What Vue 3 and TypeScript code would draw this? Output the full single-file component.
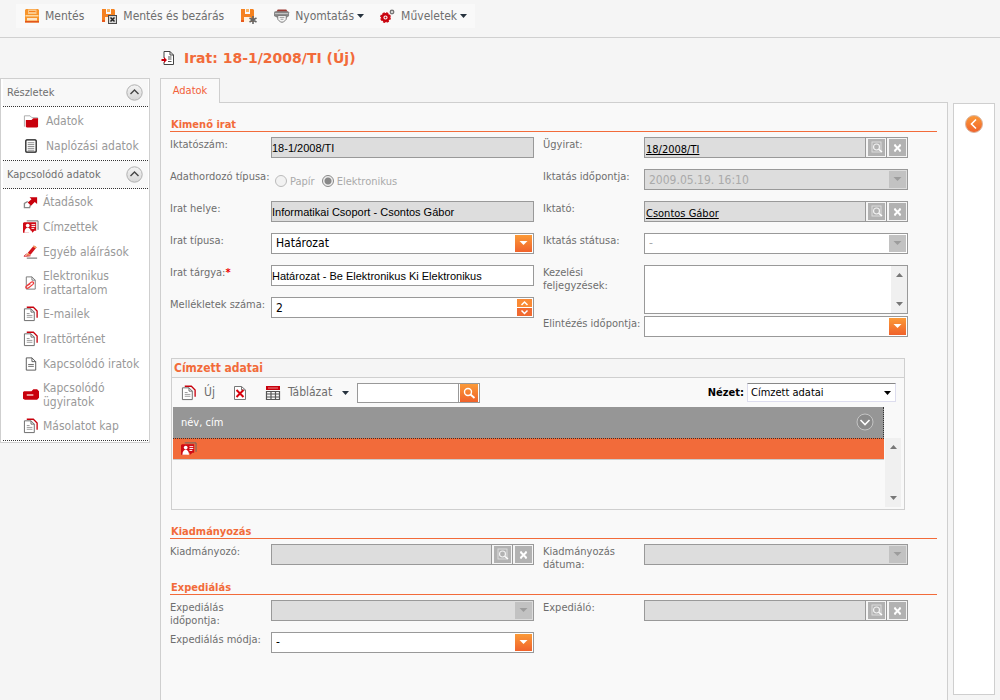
<script setup lang="ts">
import { ref } from 'vue'

interface NavItem {
  label: string
  icon: string
}
interface NavGroup {
  title: string
  wide: boolean
  items: NavItem[]
}

const groups: NavGroup[] = [
  {
    title: 'Részletek',
    wide: true,
    items: [
      { label: 'Adatok', icon: 'folder' },
      { label: 'Naplózási adatok', icon: 'log' },
    ],
  },
  {
    title: 'Kapcsolódó adatok',
    wide: false,
    items: [
      { label: 'Átadások', icon: 'handover' },
      { label: 'Címzettek', icon: 'card' },
      { label: 'Egyéb aláírások', icon: 'pen' },
      { label: 'Elektronikus irattartalom', icon: 'clip' },
      { label: 'E-mailek', icon: 'docs' },
      { label: 'Irattörténet', icon: 'docs' },
      { label: 'Kapcsolódó iratok', icon: 'doc' },
      { label: 'Kapcsolódó ügyiratok', icon: 'redfolder' },
      { label: 'Másolatot kap', icon: 'docs' },
    ],
  },
]

const subject = ref('Határozat - Be Elektronikus Ki Elektronikus')
const attachments = ref('2')
const notes = ref('')
const dueDate = ref('')
const search = ref('')
</script>

<template>
  <svg class="defs" aria-hidden="true">
    <linearGradient id="g-orange" x1="0" y1="0" x2="0" y2="1">
      <stop offset="0" stop-color="#fb9a38" />
      <stop offset="1" stop-color="#f0622b" />
    </linearGradient>
    <linearGradient id="g-grey" x1="0" y1="0" x2="0" y2="1">
      <stop offset="0" stop-color="#f4f4f4" />
      <stop offset="1" stop-color="#d6d6d6" />
    </linearGradient>
    <symbol id="i-save" viewBox="0 0 16 16">
      <path d="M2 1h12l1 1v12.500H1V2z" fill="#f7952c" />
      <path d="M4 1.500h8.500v4.500H4z" fill="#fbc98a" />
      <path d="M5 3h6.500v1H5z" fill="#f58220" />
      <path d="M1.500 7h13v1.500h-13z" fill="#fdd9a0" />
      <path d="M3 10h10v2.500H3z" fill="#fde6c8" />
      <path d="M1 13h14v1.500H1z" fill="#e2551c" />
    </symbol>
    <symbol id="i-disk" viewBox="0 0 16 16">
      <path d="M1 1h4v5h5V1h3l1 1v12H1z" fill="#f58220" />
      <path d="M6 1h3v3H6z" fill="#fbb562" />
      <path d="M4 9h7v5H4z" fill="#fff3e2" />
      <path d="M1 12h3v2H1z" fill="#e85a1c" />
    </symbol>
    <symbol id="i-saveclose" viewBox="0 0 18 16">
      <use href="#i-disk" x="1" width="16" height="16" />
      <path d="M8 7h9v9H8z" fill="#4a4a4a" />
      <path d="M9 8h7v7H9z" fill="#d5d5d5" />
      <path d="M10.500 9.500l4 4m0-4l-4 4" stroke="#222" stroke-width="1.500" />
    </symbol>
    <symbol id="i-savenew" viewBox="0 0 18 16">
      <use href="#i-disk" width="16" height="16" />
      <path d="M13 8v8M9.500 10l7 4M9.500 14l7-4" stroke="#666" stroke-width="1.600" />
    </symbol>
    <symbol id="i-print" viewBox="0 0 17 16">
      <path d="M4 1h9l2 3H2z" fill="#9c3a34" />
      <path d="M0 4l1-1h14l1 1v4l-3 2H4L0 8z" fill="#858585" />
      <path d="M1 5h14v1H1z" fill="#d0d0d0" />
      <path d="M4 7.500h9v4L10 14.500H7l-3-3z" fill="#f4f4f4" stroke="#777" />
      <path d="M6 9.500h5M7 11.500h3" stroke="#999" />
    </symbol>
    <symbol id="i-gears" viewBox="0 0 16 16">
      <circle cx="5.500" cy="9.500" r="3.300" fill="none" stroke="#c8000c" stroke-width="2.400" />
      <circle cx="5.500" cy="9.500" r="4.700" fill="none" stroke="#c8000c" stroke-width="1.400" stroke-dasharray="2.300 1.400" />
      <circle cx="5.500" cy="9.500" r="1" fill="#c8000c" />
      <circle cx="12" cy="4" r="1.700" fill="none" stroke="#777" stroke-width="1.500" />
    </symbol>
    <symbol id="i-title" viewBox="0 0 15 16">
      <path d="M3.500 8V1.500h6l3.500 3.500v9.500H3.500V12" fill="#fff" stroke="#444" />
      <path d="M9.500 1.500V5H13" fill="none" stroke="#444" />
      <path d="M7.500 7H11M7.500 9H11M7.500 11.500H11" stroke="#555" />
      <path d="M1 9h2.500V7l3 3-3 3v-2H1z" fill="#c8000c" />
    </symbol>
    <symbol id="i-folder" viewBox="0 0 17 16">
      <path d="M1.500 14V2.500h6l2 2h6V7" fill="none" stroke="#aaa" />
      <path d="M3 7h6l2-2h5v9l-1 1H4l-1-1z" fill="#c8000c" />
    </symbol>
    <symbol id="i-log" viewBox="0 0 17 16">
      <rect x="3" y="1.500" width="11" height="13" rx="1" fill="#fff" stroke="#111" stroke-width="1.300" />
      <path d="M5 4.500h7M5 6.500h7M5 8.500h7M5 10.500h7M5 12.500h7" stroke="#888" />
    </symbol>
    <symbol id="i-handover" viewBox="0 0 17 16">
      <path d="M1.500 9.500L5 7.500M1.500 9v5H7l1-3" fill="none" stroke="#888" stroke-width="1.400" />
      <path d="M7 3h8v7l-2.500-2-4 4L5 8.500l4-3.500z" fill="#c8000c" />
    </symbol>
    <symbol id="i-card" viewBox="0 0 17 16">
      <path d="M4 1.500h12V11" fill="none" stroke="#666" />
      <path d="M0 4l1-1h13v9h-2l-2 2-1-2H8l-2 2H0z" fill="#cf0a14" />
      <circle cx="5" cy="6.500" r="2" fill="#fff" />
      <path d="M1.500 14c0-7 7-7 7 0z" fill="#fff" />
      <path d="M9 5.500h4M9 7.500h4M9 9.500h3" stroke="#fff" />
    </symbol>
    <symbol id="i-pen" viewBox="0 0 17 16">
      <path d="M11.500 1l3 2-6.500 8-3-2z" fill="#d2141c" />
      <path d="M11.500 1l3 2-1 1.300-3-2z" fill="#f4a261" />
      <path d="M5 9l3 2-4.500 1.500z" fill="#f08a4a" />
      <path d="M4 10c-3 2-4 3-1.500 2.500L8 12" fill="none" stroke="#d2141c" />
      <path d="M4 14.500h11" stroke="#777" stroke-width="1.200" />
    </symbol>
    <symbol id="i-clip" viewBox="0 0 17 16">
      <path d="M3.500 1.500h6l3.500 3.500v9.500H3.500z" fill="#fff" stroke="#777" />
      <path d="M9.500 1.500V5H13" fill="none" stroke="#777" />
      <path d="M4 11l5-4c2-1 3 1 1.500 2.500L6 13c-2 1.500-4 0-2.500-1.500L8 8.500" fill="none" stroke="#ee3a3a" stroke-width="1.300" />
    </symbol>
    <symbol id="i-doc" viewBox="0 0 17 16">
      <path d="M3.500 1.500h6L13.500 5.500V14.500h-10z" fill="#fff" stroke="#555" />
      <path d="M9.500 1.500v4h4" fill="none" stroke="#555" />
      <path d="M5.500 8.500h6M5.500 10.500h6" stroke="#666" />
    </symbol>
    <symbol id="i-docs" viewBox="0 0 17 16">
      <path d="M4 .8h7l4 4V12" fill="none" stroke="#c8000c" stroke-width="1.400" />
      <path d="M1.500 2.500h7L12 6v9H1.500z" fill="#fff" stroke="#666" />
      <path d="M8.500 2.500V6H12" fill="none" stroke="#666" />
      <path d="M4 7.500h3M4 9.500h6M4 11.500h6" stroke="#999" />
    </symbol>
    <symbol id="i-redfolder" viewBox="0 0 17 16">
      <path d="M0 5l1-1h8l2-2h4l2 2v7l-2 2H2l-2-1z" fill="#c8000c" />
      <path d="M4 7h7v2H4z" fill="#f0a0a0" />
    </symbol>
    <symbol id="i-del" viewBox="0 0 16 16">
      <path d="M2.500 1.500h7L13.500 5v9.500h-11z" fill="#fff" stroke="#777" />
      <path d="M9.500 1.500V5h4" fill="none" stroke="#777" />
      <path d="M4.500 5l7 7m0-7l-7 7" stroke="#d8000c" stroke-width="2" />
    </symbol>
    <symbol id="i-table" viewBox="0 0 16 16">
      <path d="M1 1h14v4H1z" fill="#c8000c" />
      <path d="M3 3h10" stroke="#eb8b8b" />
      <path d="M1.500 6.500h13v8h-13zM1.500 9h13M1.500 12h13M6 6.500v8M10.500 6.500v8" fill="none" stroke="#555" stroke-width="1.200" />
    </symbol>
    <symbol id="i-lens" viewBox="0 0 19 19">
      <rect x="1" y="1" width="17" height="17" fill="#b2b2b2" />
      <rect x="5" y="4" width="9" height="10" fill="none" stroke="#dcdcdc" />
      <circle cx="9.500" cy="9" r="3" fill="none" stroke="#f2f2f2" stroke-width="1.200" />
      <path d="M12 11.500l3 2.500" stroke="#fff" stroke-width="1.500" />
    </symbol>
    <symbol id="i-clear" viewBox="0 0 19 19">
      <rect x="1" y="1" width="17" height="17" fill="#b2b2b2" />
      <path d="M6.500 7l6 6m0-6l-6 6" stroke="#fff" stroke-width="2" />
      <path d="M6 7h2M11 7h2M6 13h2M11 13h2" stroke="#fff" />
    </symbol>
    <symbol id="i-search" viewBox="0 0 18 18">
      <rect width="18" height="18" fill="url(#g-orange)" />
      <circle cx="8" cy="8" r="3.500" fill="none" stroke="#fff" stroke-width="1.400" />
      <path d="M10.500 10.500l4 3.500" stroke="#fff" stroke-width="1.800" />
    </symbol>
    <symbol id="i-drop" viewBox="0 0 17 17">
      <rect width="17" height="17" fill="url(#g-orange)" />
      <path d="M4.500 6h8l-4 4z" fill="#fff" />
    </symbol>
    <symbol id="i-dropoff" viewBox="0 0 17 17">
      <rect width="17" height="17" fill="#c2c2c2" />
      <path d="M4.500 6h8l-4 4z" fill="#9c9c9c" />
    </symbol>
    <symbol id="i-up" viewBox="0 0 15 8">
      <rect width="15" height="8" fill="#fa8a35" />
      <path d="M4.500 6l3-3 3 3" fill="none" stroke="#fff" stroke-width="1.500" />
    </symbol>
    <symbol id="i-down" viewBox="0 0 15 8">
      <rect width="15" height="8" fill="#f16a30" />
      <path d="M4.500 2.500l3 3 3-3" fill="none" stroke="#fff" stroke-width="1.500" />
    </symbol>
    <symbol id="i-caret" viewBox="0 0 7 4"><path d="M0 0h7L3.500 4z" /></symbol>
    <symbol id="i-scrollup" viewBox="0 0 7 4"><path d="M0 4h7L3.500 0z" fill="#777" /></symbol>
    <symbol id="i-scrolldown" viewBox="0 0 7 4"><path d="M0 0h7L3.500 4z" fill="#777" /></symbol>
    <symbol id="i-collapse" viewBox="0 0 17 17">
      <circle cx="8.500" cy="8.500" r="7.700" fill="url(#g-grey)" stroke="#b0b0b0" />
      <path d="M4.500 10l4-4 4 4" fill="none" stroke="#444" stroke-width="1.400" />
    </symbol>
    <symbol id="i-expand" viewBox="0 0 18 18">
      <circle cx="9" cy="9" r="8" fill="#8a8a8a" stroke="#c4c4c4" />
      <path d="M4.500 7l4.500 4.500L13.500 7" fill="none" stroke="#fff" stroke-width="1.600" />
    </symbol>
    <symbol id="i-back" viewBox="0 0 18 18">
      <circle cx="9" cy="9" r="8.500" fill="url(#g-orange)" stroke="#d9b7a3" />
      <path d="M11 4.500L6.500 9l4.500 4.500" fill="none" stroke="#fff" stroke-width="1.600" />
    </symbol>
  </svg>

  <div class="page">
    <header class="topbar">
      <div class="toolbar">
        <button type="button" class="tool"><svg class="ic"><use href="#i-save" /></svg>Mentés</button>
        <button type="button" class="tool"><svg class="ic wide"><use href="#i-saveclose" /></svg>Mentés és bezárás</button>
        <button type="button" class="tool" aria-label="Mentés és új"><svg class="ic wide"><use href="#i-savenew" /></svg></button>
        <button type="button" class="tool"><svg class="ic"><use href="#i-print" /></svg>Nyomtatás<svg class="caret"><use href="#i-caret" /></svg></button>
        <button type="button" class="tool"><svg class="ic"><use href="#i-gears" /></svg>Műveletek<svg class="caret"><use href="#i-caret" /></svg></button>
      </div>
    </header>

    <div class="titlebar">
      <svg class="ic"><use href="#i-title" /></svg>
      <h1>Irat: 18-1/2008/TI (Új)</h1>
    </div>

    <div class="body">
      <nav class="side">
        <section v-for="g in groups" :key="g.title" class="group">
          <h2>
            {{ g.title }}
            <button type="button" :aria-label="g.title"><svg class="round"><use href="#i-collapse" /></svg></button>
          </h2>
          <ul :class="{ roomy: g.wide }">
            <li v-for="it in g.items" :key="it.label">
              <a href="#"><svg class="ic"><use :href="'#i-' + it.icon" /></svg><span>{{ it.label }}</span></a>
            </li>
          </ul>
        </section>
      </nav>

      <main class="main">
        <div class="tabs"><a href="#" class="tab">Adatok</a><span class="tabline"></span></div>
        <div class="panel">
          <h2 class="section">Kimenő irat</h2>
          <div class="form first">
            <div class="col">
              <div class="row">
                <label for="f-num">Iktatószám:</label>
                <div class="box off"><input id="f-num" class="arial" value="18-1/2008/TI" readonly /></div>
              </div>
              <div class="row">
                <span class="lbl">Adathordozó típusa:</span>
                <div class="radios">
                  <input id="r-p" type="radio" name="medium" disabled /><label for="r-p">Papír</label>
                  <input id="r-e" type="radio" name="medium" checked disabled /><label for="r-e">Elektronikus</label>
                </div>
              </div>
              <div class="row">
                <label for="f-place">Irat helye:</label>
                <div class="box off"><input id="f-place" class="arial" value="Informatikai Csoport - Csontos Gábor" readonly /></div>
              </div>
              <div class="row">
                <label for="f-type">Irat típusa:</label>
                <div class="box">
                  <select id="f-type" class="big"><option>Határozat</option></select>
                  <svg class="drop"><use href="#i-drop" /></svg>
                </div>
              </div>
              <div class="row">
                <label for="f-subj">Irat tárgya:<b class="req">*</b></label>
                <div class="box"><input id="f-subj" v-model="subject" class="arial" /></div>
              </div>
              <div class="row">
                <label for="f-att">Mellékletek száma:</label>
                <div class="box">
                  <input id="f-att" v-model="attachments" class="big" />
                  <span class="spin">
                    <button type="button" aria-label="Növelés"><svg><use href="#i-up" /></svg></button>
                    <button type="button" aria-label="Csökkentés"><svg><use href="#i-down" /></svg></button>
                  </span>
                </div>
              </div>
            </div>
            <div class="col">
              <div class="row">
                <span class="lbl">Ügyirat:</span>
                <div class="box off">
                  <span class="value"><a href="#">18/2008/TI</a></span>
                  <button type="button" class="mini" aria-label="Keresés"><svg><use href="#i-lens" /></svg></button>
                  <button type="button" class="mini" aria-label="Törlés"><svg><use href="#i-clear" /></svg></button>
                </div>
              </div>
              <div class="row">
                <label for="f-time">Iktatás időpontja:</label>
                <div class="box off">
                  <input id="f-time" class="big" value="2009.05.19. 16:10" disabled />
                  <svg class="drop"><use href="#i-dropoff" /></svg>
                </div>
              </div>
              <div class="row">
                <span class="lbl">Iktató:</span>
                <div class="box off">
                  <span class="value"><a href="#">Csontos Gábor</a></span>
                  <button type="button" class="mini" aria-label="Keresés"><svg><use href="#i-lens" /></svg></button>
                  <button type="button" class="mini" aria-label="Törlés"><svg><use href="#i-clear" /></svg></button>
                </div>
              </div>
              <div class="row">
                <label for="f-status">Iktatás státusa:</label>
                <div class="box">
                  <select id="f-status" class="big" disabled><option>-</option></select>
                  <svg class="drop"><use href="#i-dropoff" /></svg>
                </div>
              </div>
              <div class="row tall">
                <label for="f-notes">Kezelési feljegyzések:</label>
                <div class="box">
                  <textarea id="f-notes" v-model="notes"></textarea>
                  <span class="scroll"><svg><use href="#i-scrollup" /></svg><svg><use href="#i-scrolldown" /></svg></span>
                </div>
              </div>
              <div class="row">
                <label for="f-due">Elintézés időpontja:</label>
                <div class="box">
                  <input id="f-due" v-model="dueDate" class="big" />
                  <button type="button" class="pick" aria-label="Dátum"><svg class="drop"><use href="#i-drop" /></svg></button>
                </div>
              </div>
            </div>
          </div>

          <section class="grid">
            <h3>Címzett adatai</h3>
            <div class="gridbar">
              <button type="button" class="tool"><svg class="ic"><use href="#i-docs" /></svg>Új</button>
              <button type="button" class="tool" aria-label="Törlés"><svg class="ic"><use href="#i-del" /></svg></button>
              <button type="button" class="tool"><svg class="ic"><use href="#i-table" /></svg>Táblázat<svg class="caret"><use href="#i-caret" /></svg></button>
              <div class="search">
                <input v-model="search" aria-label="Keresés" />
                <button type="button" aria-label="Keresés"><svg><use href="#i-search" /></svg></button>
              </div>
              <label for="f-view">Nézet:</label>
              <div class="view">
                <select id="f-view"><option>Címzett adatai</option></select>
                <svg class="caret"><use href="#i-caret" /></svg>
              </div>
            </div>
            <div class="gridbody">
              <table>
                <thead>
                  <tr>
                    <th>
                      <div class="head">név, cím<button type="button" aria-label="Lenyitás"><svg><use href="#i-expand" /></svg></button></div>
                    </th>
                  </tr>
                </thead>
                <tbody>
                  <tr><td><svg class="ic"><use href="#i-card" /></svg></td></tr>
                </tbody>
              </table>
              <span class="scroll"><svg><use href="#i-scrollup" /></svg><svg><use href="#i-scrolldown" /></svg></span>
            </div>
          </section>

          <h2 class="section">Kiadmányozás</h2>
          <div class="form">
            <div class="col">
              <div class="row">
                <span class="lbl">Kiadmányozó:</span>
                <div class="box off">
                  <span class="value"></span>
                  <button type="button" class="mini" aria-label="Keresés"><svg><use href="#i-lens" /></svg></button>
                  <button type="button" class="mini" aria-label="Törlés"><svg><use href="#i-clear" /></svg></button>
                </div>
              </div>
            </div>
            <div class="col">
              <div class="row">
                <label for="f-issued">Kiadmányozás dátuma:</label>
                <div class="box off">
                  <input id="f-issued" class="big" disabled />
                  <svg class="drop"><use href="#i-dropoff" /></svg>
                </div>
              </div>
            </div>
          </div>

          <h2 class="section">Expediálás</h2>
          <div class="form">
            <div class="col">
              <div class="row">
                <label for="f-exp">Expediálás időpontja:</label>
                <div class="box off">
                  <input id="f-exp" class="big" disabled />
                  <svg class="drop"><use href="#i-dropoff" /></svg>
                </div>
              </div>
              <div class="row">
                <label for="f-mode">Expediálás módja:</label>
                <div class="box">
                  <select id="f-mode" class="big"><option>-</option></select>
                  <svg class="drop"><use href="#i-drop" /></svg>
                </div>
              </div>
            </div>
            <div class="col">
              <div class="row">
                <span class="lbl">Expediáló:</span>
                <div class="box off">
                  <span class="value"></span>
                  <button type="button" class="mini" aria-label="Keresés"><svg><use href="#i-lens" /></svg></button>
                  <button type="button" class="mini" aria-label="Törlés"><svg><use href="#i-clear" /></svg></button>
                </div>
              </div>
            </div>
          </div>
        </div>
      </main>

      <aside class="drawer">
        <button type="button" aria-label="Panel megnyitása"><svg><use href="#i-back" /></svg></button>
      </aside>
    </div>
  </div>
</template>

<style>
body {
  margin: 0;
  background: #f5f5f5;
}
</style>

<style scoped>
* {
  box-sizing: border-box;
}
.defs {
  position: absolute;
  width: 0;
  height: 0;
}
.page {
  min-height: 100vh;
  display: flex;
  flex-direction: column;
  font-family: 'DejaVu Sans Condensed', 'Noto Sans', sans-serif;
  font-size: 11px;
  line-height: 13px;
  color: #6e6e6e;
}
h1,
h2,
h3,
ul {
  margin: 0;
  padding: 0;
  font-size: 11px;
}
button {
  border: 0;
  padding: 0;
  background: none;
  font: inherit;
  color: inherit;
  display: flex;
  align-items: center;
}
input,
select,
textarea {
  border: 0;
  margin: 0;
  padding: 0;
  background: none;
  font: inherit;
  color: #000;
  outline: none;
  appearance: none;
  min-width: 0;
  border-radius: 0;
}
svg {
  display: block;
  flex: none;
}
.ic {
  width: 16px;
  height: 16px;
}
.ic.wide {
  width: 18px;
}
.caret {
  width: 7px;
  height: 4px;
  fill: #26323e;
}
.topbar {
  height: 38px;
  padding: 4px 16px;
  border-bottom: 1px solid #d0d0d0;
}
.toolbar {
  display: inline-flex;
  height: 24px;
  gap: 16px;
  padding: 0 8px;
  background: #f9f9f9;
}
.tool {
  font-size: 12px;
  gap: 5px;
}
.toolbar .tool .caret {
  margin-left: -2px;
}
.titlebar {
  height: 40px;
  display: flex;
  align-items: center;
  gap: 8px;
  padding-left: 160px;
}
h1 {
  font-family: 'DejaVu Sans', sans-serif;
  font-size: 14px;
  line-height: 18px;
  color: #f26b3a;
}
.body {
  flex: 1;
  display: flex;
  align-items: flex-start;
  padding-right: 5px;
}
.side {
  flex: none;
  width: 150px;
  margin-right: 10px;
  padding: 0 1px 1px 2px;
  border: 1px solid #cfcfcf;
  background: #fff;
}
.group h2 {
  height: 28px;
  display: flex;
  align-items: center;
  justify-content: space-between;
  padding: 0 5px 0 4px;
  background: #f8f8f8;
  border-bottom: 1px dotted #333;
  font-weight: normal;
}
.round {
  width: 17px;
  height: 17px;
}
.group ul {
  list-style: none;
  padding: 1px 0 1px 20px;
  border-bottom: 1px dotted #333;
}
.group ul.roomy {
  padding-top: 2px;
}
.group a {
  min-height: 25px;
  display: flex;
  align-items: center;
  gap: 4px;
  padding: 4px 0 5px;
  font-size: 12px;
  line-height: 14px;
  color: #999;
  text-decoration: none;
}
.group .roomy a {
  gap: 7px;
}
.main {
  flex: 1;
  min-width: 0;
  align-self: stretch;
  display: flex;
  flex-direction: column;
}
.tabs {
  display: flex;
  height: 25px;
}
.tab {
  width: 60px;
  border: 1px solid #cfcfcf;
  border-bottom: 0;
  background: #f9f9f9;
  text-align: center;
  line-height: 23px;
  color: #f2603a;
  text-decoration: none;
}
.tabline {
  flex: 1;
  border-bottom: 1px solid #cfcfcf;
}
.panel {
  flex: 1;
  padding: 15px 10px 20px 9px;
  border: 1px solid #cfcfcf;
  border-width: 0 1px;
  background: #f9f9f9;
}
.section {
  height: 14px;
  margin-bottom: 5px;
  padding-left: 1px;
  line-height: 14px;
  color: #f26b3a;
  border-bottom: 1px solid #f26b3a;
}
.form {
  display: grid;
  grid-template-columns: 364fr 365fr;
  gap: 9px;
  padding-right: 29px;
  margin-bottom: 5px;
}
.form.first {
  margin-bottom: 10px;
}
.row {
  display: flex;
  align-items: flex-start;
  min-height: 32px;
}
.row.tall {
  min-height: 51px;
}
.row > label,
.lbl {
  flex: none;
  width: 101px;
  padding-top: 1px;
}
.req {
  color: #e00;
}
.box {
  flex: 1;
  min-width: 0;
  height: 21px;
  display: flex;
  align-items: center;
  border: 1px solid #999;
  background: #fff;
  color: #000;
}
.box > input,
.box > select {
  flex: 1;
  height: 19px;
}
.off {
  background: #ddd;
}
.arial {
  font-family: 'Liberation Sans', Arial, sans-serif;
}
.big {
  font-size: 12px;
  padding-left: 4px;
}
.big:disabled {
  color: #aaa;
  opacity: 1;
}
.drop {
  width: 17px;
  height: 17px;
  margin-right: 1px;
  pointer-events: none;
}
.spin {
  display: flex;
  flex-direction: column;
  gap: 1px;
  margin-right: 1px;
}
.spin svg {
  width: 15px;
  height: 8px;
}
.value {
  flex: 1;
  padding: 3px 1px 0;
}
.value a {
  color: #000;
  text-decoration: underline;
}
.mini {
  width: 21px;
  height: 19px;
  justify-content: center;
  background: #f5f5f5;
  border-left: 1px solid #999;
}
.mini svg {
  width: 19px;
  height: 19px;
}
.radios {
  display: flex;
  align-items: center;
  height: 24px;
  gap: 3px;
  padding-left: 4px;
  color: #aaa;
}
.radios input {
  width: 12px;
  height: 12px;
  border: 1px solid #bbb;
  border-radius: 50%;
  background: #f2f2f2;
}
.radios input:checked {
  border-color: #888;
  background: radial-gradient(#888 0 3px, #eee 4px);
}
.radios label {
  margin-right: 4px;
}
.tall .box {
  height: 49px;
  align-items: stretch;
}
textarea {
  flex: 1;
  resize: none;
}
.scroll {
  width: 16px;
  display: flex;
  flex-direction: column;
  justify-content: space-between;
  align-items: center;
  padding: 7px 0;
  background: #f0f0f0;
}
.scroll svg {
  width: 7px;
  height: 4px;
}
.grid {
  margin: 0 32px 15px 1px;
  border: 1px solid #cfcfcf;
}
h3 {
  height: 19px;
  padding-left: 2px;
  font-size: 12px;
  line-height: 19px;
  color: #f26b3a;
  background: #f5f5f5;
  border-bottom: 1px solid #cfcfcf;
}
.gridbar {
  display: flex;
  align-items: center;
  height: 29px;
  padding: 0 8px 0 9px;
}
.gridbar .tool {
  gap: 7px;
  margin-right: 17px;
}
.gridbar .tool .caret {
  margin-left: 3px;
}
.gridbar .tool:nth-child(3) {
  margin-right: 8px;
}
.search {
  display: flex;
  width: 123px;
  height: 20px;
  border: 1px solid #999;
  background: #fff;
  margin-right: auto;
}
.search input {
  flex: 1;
}
.search button {
  border-left: 1px solid #999;
  padding: 0 1px;
}
.search svg {
  width: 18px;
  height: 18px;
}
.gridbar label {
  font-weight: bold;
  color: #000;
  margin-right: 3px;
}
.view {
  width: 149px;
  height: 19px;
  display: flex;
  align-items: center;
  background: #fff;
  border: 1px solid #dde;
  border-top-color: #888;
}
.view select {
  flex: 1;
  height: 17px;
  padding-left: 3px;
}
.view .caret {
  fill: #000;
  margin-right: 4px;
}
.gridbody {
  display: flex;
  align-items: flex-start;
  height: 102px;
  padding: 0 3px 2px 1px;
}
table {
  flex: 1;
  border-collapse: collapse;
}
th {
  height: 31px;
  padding: 0 9px 0 8px;
  background: #969696;
  border: 1px dotted #333;
  border-width: 0 1px 1px 0;
  color: #fff;
  font-weight: normal;
  text-align: left;
}
.head {
  display: flex;
  align-items: center;
  justify-content: space-between;
}
.head svg {
  width: 18px;
  height: 18px;
}
td {
  height: 21px;
  padding: 0 8px;
  background: #f26b3a;
  border-bottom: 1px solid #ccc;
}
.gridbody .scroll {
  height: 69px;
  margin: 31px 0 0 1px;
}
.drawer {
  flex: none;
  align-self: stretch;
  width: 42px;
  margin: 25px 0 5px 5px;
  padding: 11px;
  border: 1px solid #cfcfcf;
  background: #fff;
}
.drawer svg {
  width: 18px;
  height: 18px;
}
</style>
